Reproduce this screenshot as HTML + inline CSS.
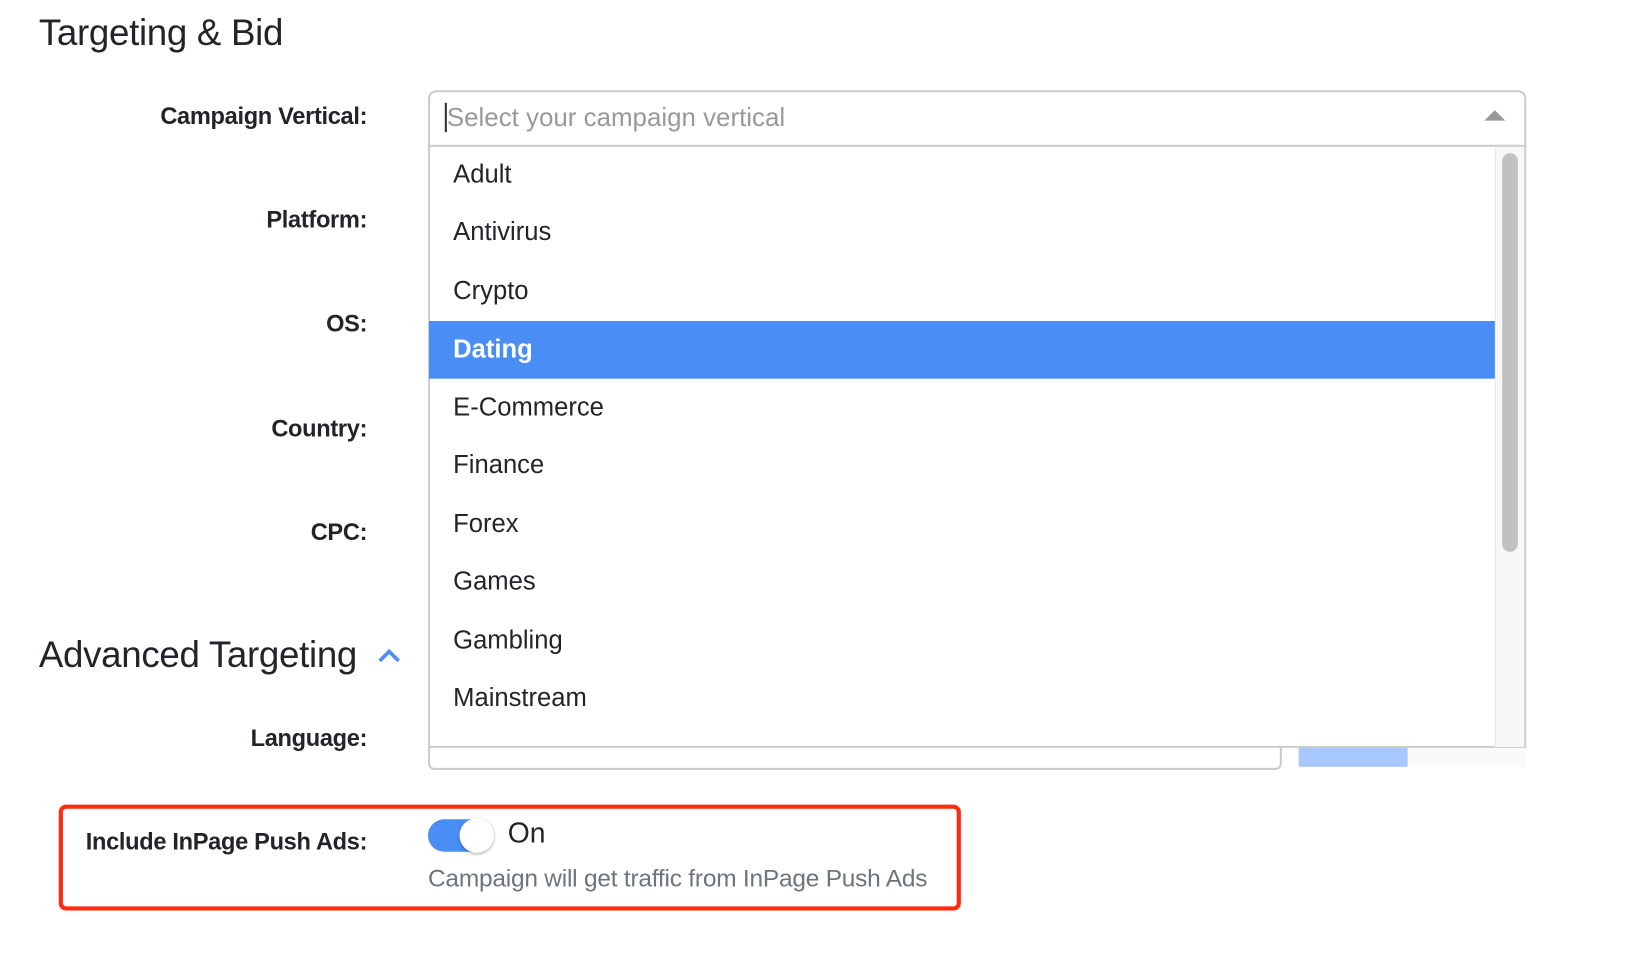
<!DOCTYPE html>
<html><head><meta charset="utf-8"><style>
*{box-sizing:border-box;margin:0;padding:0}
body{width:1642px;height:924px;background:#fff;font-family:"Liberation Sans",sans-serif;color:#212529;position:relative;overflow:hidden}
#w{position:absolute;left:0;top:0;width:1642px;height:924px;transform:scale(1.049);transform-origin:0 0}
.abs{position:absolute}
h1{position:absolute;left:37px;top:12px;font-size:35px;font-weight:500;color:#212529;letter-spacing:-0.3px}
.lbl{position:absolute;right:1292px;font-size:22.5px;font-weight:bold;white-space:nowrap;letter-spacing:-0.3px}
.opt{position:absolute;left:409px;width:1016px;height:55.4px;line-height:55.4px;padding-left:23px;font-size:24.4px;color:#212529}
</style></head><body><div id="w">
<h1>Targeting &amp; Bid</h1>
<div class="lbl" style="top:98px">Campaign Vertical:</div>
<div class="lbl" style="top:197px">Platform:</div>
<div class="lbl" style="top:296px">OS:</div>
<div class="lbl" style="top:396px">Country:</div>
<div class="lbl" style="top:495px">CPC:</div>
<div class="abs" style="left:37px;top:605px;font-size:35px;font-weight:500;letter-spacing:-0.3px">Advanced Targeting</div>
<svg class="abs" style="left:360px;top:617px" width="22" height="16" viewBox="0 0 22 16"><path d="M2 13 L11 4 L20 13" fill="none" stroke="#4a8ef5" stroke-width="3.5"/></svg>
<div class="lbl" style="top:691px">Language:</div>

<div class="abs" style="left:408px;top:690px;width:814px;height:44px;border:2px solid #ccc;border-radius:6px"></div>
<div class="abs" style="left:1238px;top:710px;width:104px;height:21px;background:#a6c8ff"></div>
<div class="abs" style="left:1342px;top:710px;width:113px;height:21px;background:#fafafa"></div>

<div class="abs" style="left:408px;top:86px;width:1047px;height:627px;border:2px solid #ccc;border-radius:8px 8px 0 0;background:#fff"></div>
<div class="abs" style="left:409px;top:138px;width:1045px;height:2px;background:#ccc"></div>
<div class="abs" style="left:424px;top:98px;width:2px;height:28px;background:#333"></div>
<div class="abs" style="left:426px;top:99px;font-size:24.7px;color:#999">Select your campaign vertical</div>
<div class="abs" style="left:1415px;top:105px;width:0;height:0;border-left:10px solid transparent;border-right:10px solid transparent;border-bottom:10px solid #999"></div>
<div class="abs" style="left:1425px;top:140px;width:28px;height:572px;background:#f7f7f7;border-left:1px solid #e8e8e8"></div>
<div class="abs" style="left:1432px;top:146px;width:15px;height:380px;background:#c1c1c1;border-radius:8px"></div>
<div class="opt" style="top:139px">Adult</div>
<div class="opt" style="top:194.4px">Antivirus</div>
<div class="opt" style="top:249.8px">Crypto</div>
<div class="opt" style="top:306px;background:#4a8ef5;color:#fff;font-weight:bold">Dating</div>
<div class="opt" style="top:361px">E-Commerce</div>
<div class="opt" style="top:416.4px">Finance</div>
<div class="opt" style="top:471.8px">Forex</div>
<div class="opt" style="top:527.2px">Games</div>
<div class="opt" style="top:582.6px">Gambling</div>
<div class="opt" style="top:638px">Mainstream</div>

<div class="abs" style="left:56px;top:767px;width:860px;height:101px;border:4px solid #ff2a10;border-radius:7px"></div>
<div class="lbl" style="top:790px">Include InPage Push Ads:</div>
<div class="abs" style="left:408px;top:781px;width:62px;height:31px;background:#4a8ef5;border-radius:16px"></div>
<div class="abs" style="left:438px;top:780px;width:33px;height:33px;background:#fff;border-radius:50%;box-shadow:0 1px 3px rgba(0,0,0,.35)"></div>
<div class="abs" style="left:484px;top:779px;font-size:27px;color:#212529">On</div>
<div class="abs" style="left:408px;top:824px;font-size:23.3px;color:#6c757d;letter-spacing:-0.2px">Campaign will get traffic from InPage Push Ads</div>
</div></body></html>
